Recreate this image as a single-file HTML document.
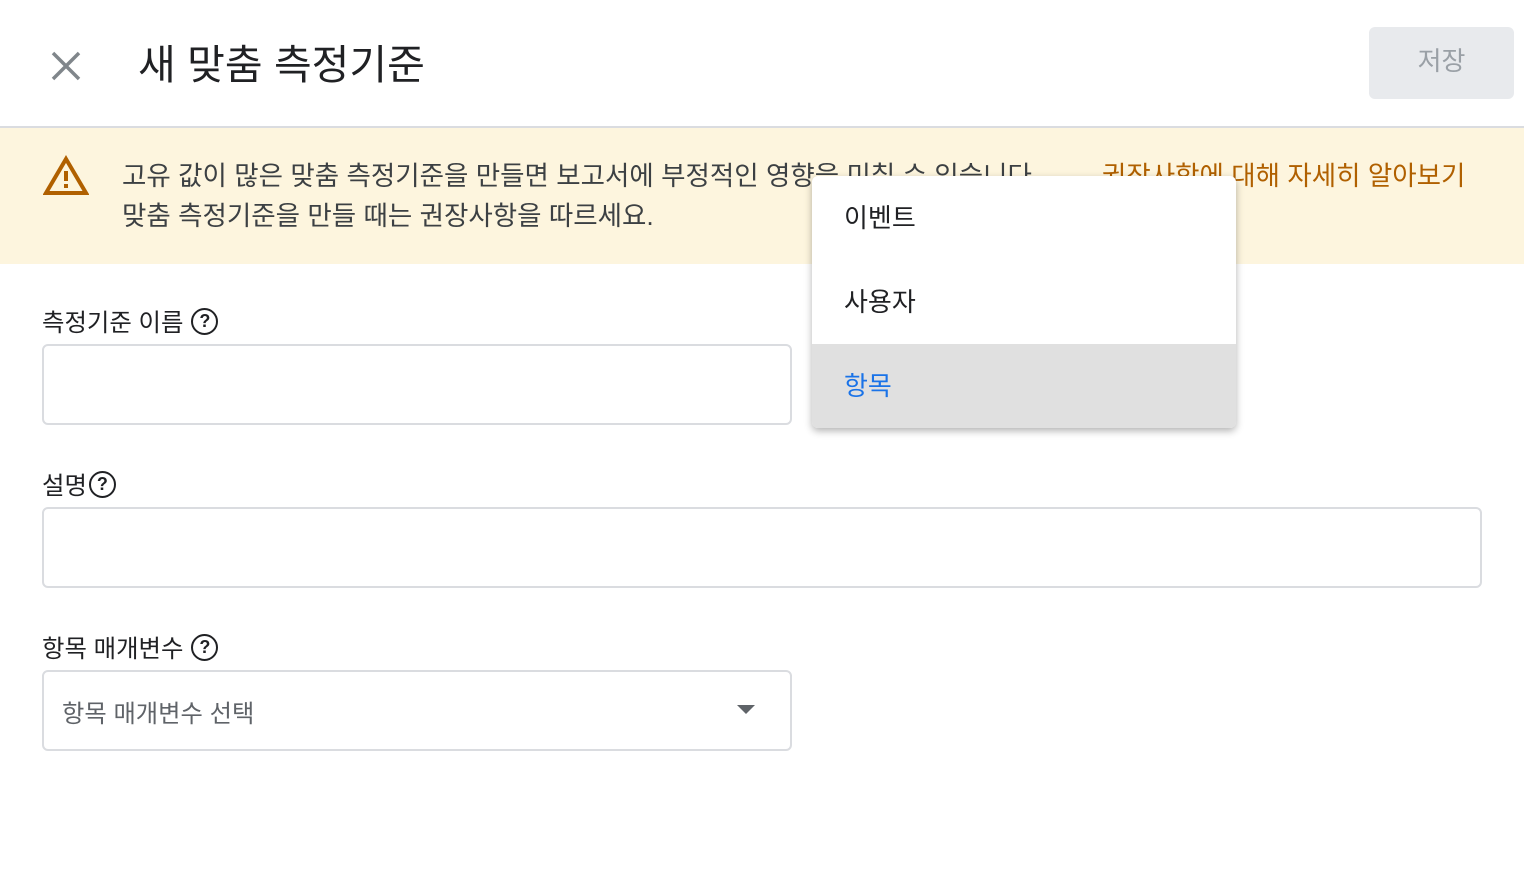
<!DOCTYPE html>
<html><head><meta charset="utf-8"><style>
body{margin:0;width:1524px;height:886px;background:#fff;font-family:"Liberation Sans","Noto Sans CJK KR",sans-serif;position:relative;overflow:hidden;color:#202124}
.abs{position:absolute}
.inp{position:absolute;border:2px solid #dadce0;border-radius:6px;box-sizing:border-box;background:#fff}
.lbl{position:absolute;font-size:24.4px;color:#202124;display:flex;align-items:center}
.q{display:inline-block;width:23px;height:23px;border:2.5px solid #202124;border-radius:50%;font-size:18px;font-weight:bold;text-align:center;line-height:23px;margin-left:8px}
</style></head><body>
<svg class="abs" style="left:50px;top:50px" width="32" height="32" viewBox="0 0 32 32"><path d="M3 3L29 29M29 3L3 29" stroke="#80868b" stroke-width="3.5"/></svg>
<div class="abs" style="left:138px;top:31px;font-size:41px;color:#202124">새 맞춤 측정기준</div>
<div class="abs" style="left:1369px;top:27px;width:145px;height:72px;background:#e8eaed;border-radius:6px;color:#9aa0a6;font-size:26px;text-align:center;line-height:68px">저장</div>
<div class="abs" style="left:0;top:126px;width:1524px;height:2px;background:#dadce0"></div>
<div class="abs" style="left:0;top:128px;width:1524px;height:136px;background:#fdf5de"></div>
<svg class="abs" style="left:43px;top:155px" width="46" height="40" viewBox="0 0 46 40"><path d="M23 4L43 38H3Z" fill="none" stroke="#b06000" stroke-width="4" stroke-linejoin="miter"/><rect x="21" y="16" width="4" height="10" fill="#b06000"/><rect x="21" y="29" width="4" height="4" fill="#b06000"/></svg>
<div class="abs" style="left:122px;top:156px;font-size:26.5px;line-height:40px;color:#3c4043;white-space:nowrap">고유 값이 많은 맞춤 측정기준을 만들면 보고서에 부정적인 영향을 미칠 수 있습니다.<br>맞춤 측정기준을 만들 때는 권장사항을 따르세요.</div>
<div class="abs" style="left:1102px;top:156px;font-size:26.5px;line-height:40px;color:#b06000;white-space:nowrap">권장사항에 대해 자세히 알아보기</div>
<div class="lbl" style="left:42px;top:304px">측정기준 이름<span class="q">?</span></div>
<div class="inp" style="left:42px;top:344px;width:750px;height:81px"></div>
<div class="lbl" style="left:42px;top:467px">설명<span class="q" style="margin-left:2px">?</span></div>
<div class="inp" style="left:42px;top:507px;width:1440px;height:81px"></div>
<div class="lbl" style="left:42px;top:630px">항목 매개변수<span class="q">?</span></div>
<div class="inp" style="left:42px;top:670px;width:750px;height:81px"></div>
<div class="abs" style="left:62px;top:694px;font-size:24.3px;color:#5f6368">항목 매개변수 선택</div>
<svg class="abs" style="left:737px;top:705px" width="18" height="10"><path d="M0 0H18L9 9Z" fill="#5f6368"/></svg>
<div class="abs" style="left:812px;top:176px;width:424px;height:252px;background:#fff;border-radius:6px;box-shadow:0 3px 8px rgba(0,0,0,.3);overflow:hidden;font-size:26px">
<div style="height:84px;line-height:84px;padding-left:32px">이벤트</div>
<div style="height:84px;line-height:84px;padding-left:32px">사용자</div>
<div style="height:84px;line-height:84px;padding-left:32px;background:#e0e0e0;color:#1a73e8">항목</div>
</div>
</body></html>
